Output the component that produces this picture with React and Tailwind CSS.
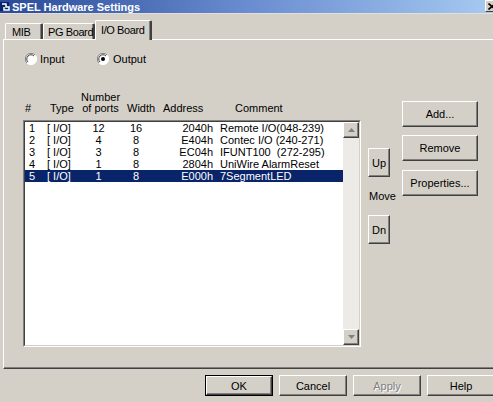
import React from "react";

const rows = [
  { n: "1", ports: "12", width: "16", addr: "2040h", comment: "Remote I/O(048-239)" },
  { n: "2", ports: "4", width: "8", addr: "E404h", comment: "Contec I/O (240-271)" },
  { n: "3", ports: "3", width: "8", addr: "EC04h", comment: "IFUNT100  (272-295)" },
  { n: "4", ports: "1", width: "8", addr: "2804h", comment: "UniWire AlarmReset" },
  { n: "5", ports: "1", width: "8", addr: "E000h", comment: "7SegmentLED", selected: true },
];

const bevel =
  "border border-t-white border-l-white border-b-[#404040] border-r-[#404040] shadow-[inset_-1px_-1px_#808080] bg-[#d4d0c8]";

function Button({ children, className = "", disabled, isDefault }) {
  const inner = (
    <div className={`flex h-full w-full items-center justify-center ${bevel}`}>
      <span className={disabled ? "text-[#808080] [text-shadow:1px_1px_#ffffff]" : ""}>{children}</span>
    </div>
  );
  if (isDefault) {
    return <div className={`border border-black ${className}`}>{inner}</div>;
  }
  return <div className={className}>{inner}</div>;
}

function Radio({ checked }) {
  return (
    <svg width="12" height="12" viewBox="0 0 12 12">
      <circle cx="6" cy="6" r="5.5" fill="#ffffff" />
      <path d="M10 2 A5.5 5.5 0 0 0 2 10" fill="none" stroke="#808080" strokeWidth="1" />
      <path d="M9 3 A4.2 4.2 0 0 0 3 9" fill="none" stroke="#404040" strokeWidth="1" />
      <path d="M2 10 A5.5 5.5 0 0 0 10 2" fill="none" stroke="#ffffff" strokeWidth="1" />
      {checked ? <circle cx="6" cy="6" r="2" fill="#000000" /> : null}
    </svg>
  );
}

function Tab({ label, className = "", active }) {
  return (
    <div
      className={`relative flex items-start whitespace-nowrap rounded-t-[2px] border-t border-l border-t-white border-l-white border-r-2 border-r-[#404040] bg-[#d4d0c8] tracking-[-0.4px] shadow-[inset_-1px_0_#808080] ${
        active ? "z-10 h-[20px] -mb-[1px] pt-[3px]" : "h-[16px] pt-[2px]"
      } ${className}`}
    >
      {label}
    </div>
  );
}

function ScrollArrow({ up }) {
  return (
    <div className={`flex h-[16px] w-[16px] items-center justify-center ${bevel}`}>
      <svg width="7" height="4" viewBox="0 0 7 4">
        {up ? (
          <path d="M3.5 0 L7 4 L0 4 Z" fill="#808080" />
        ) : (
          <path d="M0 0 L7 0 L3.5 4 Z" fill="#808080" />
        )}
      </svg>
    </div>
  );
}

export default function App() {
  return (
    <div className="flex h-[402px] w-[493px] flex-col overflow-hidden bg-[#d4d0c8] font-['Liberation_Sans',Arial,sans-serif] text-[11px] leading-[12px] text-black">
      {/* title bar */}
      <div className="flex h-[13px] items-center bg-gradient-to-r from-[#2a4a98] via-[#6a8cd0] to-[#a6caf0]">
        <svg width="11" height="11" viewBox="0 0 11 11">
          <rect x="0" y="1" width="9" height="9" fill="#0a246a" />
          <path d="M2 3 L6 3 L6 6 L9 6 L9 9 L4 9 L4 6" fill="none" stroke="#ffffff" strokeWidth="1.5" />
        </svg>
        <span className="ml-[1px] font-bold text-white">SPEL Hardware Settings</span>
        <div className="ml-auto mr-[-6px] flex h-[12px] w-[14px] items-center justify-center self-start border border-t-white border-l-white border-b-[#404040] border-r-[#404040] bg-[#d4d0c8]">
          <svg width="8" height="7" viewBox="0 0 8 7">
            <path d="M0.5 0.5 L7.5 6.5 M7.5 0.5 L0.5 6.5" stroke="#000" strokeWidth="1.6" />
          </svg>
        </div>
      </div>
      <div className="h-[1px] bg-[#e4e0d8]" />

      {/* tabs */}
      <div className="flex h-[25px] items-end pl-[5px]">
        <Tab label="MIB" className="w-[38px] pl-[6px]" />
        <Tab label="PG Board" className="w-[52px] pl-[4px]" />
        <Tab label="I/O Board" className="w-[57px] pl-[5px]" active />
      </div>

      {/* panel */}
      <div className="ml-[3px] mr-[-10px] h-[330px] border-t border-l border-t-white border-l-white border-b border-b-[#404040] shadow-[inset_0_-1px_#808080]">
        <div className="flex flex-col pl-[19px] pt-[13px]">
          {/* radio row */}
          <div className="flex h-[12px] items-center">
            <div className="ml-[2px] flex w-[72px] items-center gap-[3px]">
              <Radio />
              <span>Input</span>
            </div>
            <div className="flex items-center gap-[4px]">
              <Radio checked />
              <span>Output</span>
            </div>
          </div>

          <div className="mt-[23px] flex">
            {/* list column */}
            <div className="flex flex-col">
              <div className="flex h-[32px] items-end whitespace-nowrap pb-[6px] leading-[11px]">
                <div className="w-[23px] pl-[2px]">#</div>
                <div className="w-[35px] pl-[4px]">Type</div>
                <div className="flex w-[39px] flex-col items-center">
                  <span>Number</span>
                  <span>of ports</span>
                </div>
                <div className="w-[40px] pl-[7px]">Width</div>
                <div className="w-[75px] pl-[3px]">Address</div>
                <div>Comment</div>
              </div>
              <div className="h-[227px] w-[338px] border border-t-[#808080] border-l-[#808080] border-b-white border-r-white">
                <div className="flex h-full border border-t-[#404040] border-l-[#404040] border-b-[#d4d0c8] border-r-[#d4d0c8] bg-white">
                  <div className="flex-1">
                    {rows.map((r) => (
                      <div
                        key={r.n}
                        className={`flex h-[12px] ${r.selected ? "bg-[#0a246a] text-white" : ""}`}
                      >
                        <div className="w-[21px] pl-[4px]">{r.n}</div>
                        <div className="w-[35px] whitespace-pre pl-[1px]">{"[ I/O]"}</div>
                        <div className="w-[35px] text-center">{r.ports}</div>
                        <div className="w-[40px] text-center">{r.width}</div>
                        <div className="w-[59px] pr-[2px] text-right">{r.addr}</div>
                        <div className="whitespace-pre pl-[5px]">{r.comment}</div>
                      </div>
                    ))}
                  </div>
                  <div className="flex w-[16px] flex-col bg-[#ecebe7]">
                    <ScrollArrow up />
                    <div className="flex-1" />
                    <ScrollArrow />
                  </div>
                </div>
              </div>
            </div>

            {/* move column */}
            <div className="ml-[7px] flex w-[22px] flex-col">
              <Button className="mt-[60px] h-[29px]">Up</Button>
              <div className="flex h-[38px] items-center pl-[1px]">Move</div>
              <Button className="h-[29px]">Dn</Button>
            </div>

            {/* action buttons */}
            <div className="ml-[12px] flex w-[76px] flex-col">
              <Button className="mt-[13px] h-[26px]">Add...</Button>
              <Button className="mt-[8px] h-[26px]">Remove</Button>
              <Button className="mt-[9px] h-[26px]">Properties...</Button>
            </div>
          </div>
        </div>
      </div>

      {/* bottom buttons */}
      <div className="mt-[6px] flex gap-[6px] pl-[205px]">
        <Button className="h-[21px] w-[68px] shrink-0" isDefault>
          OK
        </Button>
        <Button className="h-[21px] w-[68px] shrink-0">Cancel</Button>
        <Button className="h-[21px] w-[68px] shrink-0" disabled>
          Apply
        </Button>
        <Button className="h-[21px] w-[68px] shrink-0">Help</Button>
      </div>
    </div>
  );
}
